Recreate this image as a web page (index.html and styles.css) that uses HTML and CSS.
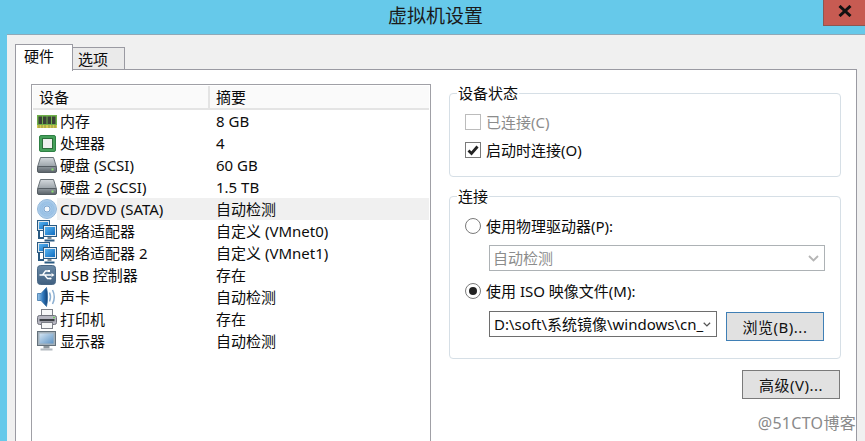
FILE: index.html
```html
<!DOCTYPE html>
<html lang="zh-CN">
<head>
<meta charset="utf-8">
<title>虚拟机设置</title>
<link rel="stylesheet" href="styles.css">
</head>
<body>
<svg class="defs" width="0" height="0" aria-hidden="true">
  <defs>
    <linearGradient id="disk" x1="0" y1="0" x2="0" y2="1"><stop offset="0" stop-color="#d4d9dd"/><stop offset="1" stop-color="#98a0a6"/></linearGradient>
    <linearGradient id="slab" x1="0" y1="0" x2="0" y2="1"><stop offset="0" stop-color="#8f979d"/><stop offset="1" stop-color="#596168"/></linearGradient>
    <linearGradient id="scr" x1="0" y1="0" x2="1" y2="1"><stop offset="0" stop-color="#58b4f0"/><stop offset="1" stop-color="#0f6cc0"/></linearGradient>
    <linearGradient id="disp" x1="0" y1="0" x2="1" y2="1"><stop offset="0" stop-color="#d3e4f2"/><stop offset="1" stop-color="#5e93c4"/></linearGradient>
    <linearGradient id="spk" x1="0" y1="0" x2="1" y2="0"><stop offset="0" stop-color="#9cc7ea"/><stop offset=".55" stop-color="#2f78bd"/><stop offset="1" stop-color="#123f73"/></linearGradient>
    <linearGradient id="usb" x1="0" y1="0" x2="0" y2="1"><stop offset="0" stop-color="#6c8aa6"/><stop offset="1" stop-color="#3f5f80"/></linearGradient>
    <radialGradient id="cd" cx=".5" cy=".5" r=".55"><stop offset="0" stop-color="#dbe9f6"/><stop offset=".55" stop-color="#8db9e2"/><stop offset="1" stop-color="#c3dbf1"/></radialGradient>
    <symbol id="i-hdd" viewBox="0 0 20 16"><path d="M3.500.5h13l3 9.500H.5z" fill="url(#disk)" stroke="#6a7278"/><rect x=".5" y="9.500" width="19" height="6" rx="1.500" fill="url(#slab)" stroke="#555d63"/><rect x="14.500" y="11.500" width="2" height="2" fill="#8be070"/></symbol>
    <symbol id="i-net" viewBox="0 0 20 22"><rect x=".5" y=".5" width="12" height="10" fill="#dfe6ec" stroke="#2a5a82"/><rect x="2" y="2" width="9" height="7" fill="url(#scr)"/><path d="M2 11v7h5" stroke="#2a5a82" stroke-width="2" fill="none"/><rect x="6.500" y="5.500" width="13" height="11" fill="#e6ecf1" stroke="#2a5a82"/><rect x="8" y="7" width="10" height="8" fill="url(#scr)"/><path d="M10.500 17h4v2h-4z" fill="#7d8a95"/><path d="M7.500 20.500h10" stroke="#2a5a82" stroke-width="2"/></symbol>
  </defs>
</svg>
<div class="window">
  <header class="titlebar">
    <h1 class="title">虚拟机设置</h1>
    <button class="close" type="button" aria-label="关闭">
      <svg width="14" height="12" viewBox="0 0 14 12"><path d="M1.500 1 12.500 11M12.500 1 1.500 11" stroke="#111" stroke-width="3" fill="none"/></svg>
    </button>
  </header>
  <div class="client">
    <nav class="tabs">
      <div class="tab active">硬件</div>
      <div class="tab">选项</div>
    </nav>
    <main class="panel">
      <section class="list">
        <div class="list-head">
          <div class="head-cell first">设备</div>
          <div class="head-cell">摘要</div>
        </div>
        <div class="row">
          <span class="ico"><svg width="20" height="13" viewBox="0 0 20 13"><rect x="0" y="0" width="20" height="11" fill="#6fb04a"/><rect x="0" y="10" width="20" height="3" fill="#d3c850"/><path d="M2 13v-3M5 13v-3M8 13v-3M12 13v-3M15 13v-3M18 13v-3" stroke="#7a8a40" stroke-width=".8"/><rect x="1.500" y="1.500" width="3.500" height="7.500" fill="#3a4238"/><rect x="6" y="1.500" width="3.500" height="7.500" fill="#3a4238"/><rect x="10.500" y="1.500" width="3.500" height="7.500" fill="#3a4238"/><rect x="15" y="1.500" width="3.500" height="7.500" fill="#3a4238"/></svg></span>
          <div class="cells"><span class="name">内存</span><span class="val">8 GB</span></div>
        </div>
        <div class="row">
          <span class="ico"><svg class="ico-cpu" width="17" height="17" viewBox="0 0 17 17"><rect x=".5" y=".5" width="16" height="16" rx="1.500" fill="#45a05a" stroke="#2f8045"/><rect x="3.500" y="3.500" width="10" height="10" fill="#eef0ee" stroke="#2c6d3a"/></svg></span>
          <div class="cells"><span class="name">处理器</span><span class="val">4</span></div>
        </div>
        <div class="row">
          <span class="ico"><svg width="20" height="16"><use href="#i-hdd"/></svg></span>
          <div class="cells"><span class="name">硬盘 (SCSI)</span><span class="val">60 GB</span></div>
        </div>
        <div class="row">
          <span class="ico"><svg width="20" height="16"><use href="#i-hdd"/></svg></span>
          <div class="cells"><span class="name">硬盘 2 (SCSI)</span><span class="val">1.5 TB</span></div>
        </div>
        <div class="row">
          <span class="ico"><svg width="20" height="20" viewBox="0 0 20 20"><circle cx="10" cy="10" r="9.500" fill="url(#cd)" stroke="#93b7d9"/><circle cx="10" cy="10" r="6" fill="none" stroke="#a9cbe9" stroke-width=".8"/><circle cx="10" cy="10" r="3" fill="#f4f8fc" stroke="#7ea6cf"/></svg></span>
          <div class="cells selected"><span class="name">CD/DVD (SATA)</span><span class="val">自动检测</span></div>
        </div>
        <div class="row">
          <span class="ico"><svg width="20" height="22"><use href="#i-net"/></svg></span>
          <div class="cells"><span class="name">网络适配器</span><span class="val">自定义 (VMnet0)</span></div>
        </div>
        <div class="row">
          <span class="ico"><svg width="20" height="22"><use href="#i-net"/></svg></span>
          <div class="cells"><span class="name">网络适配器 2</span><span class="val">自定义 (VMnet1)</span></div>
        </div>
        <div class="row">
          <span class="ico"><svg width="19" height="20" viewBox="0 0 19 20"><rect x=".5" y=".5" width="18" height="19" rx="3" fill="url(#usb)" stroke="#4a6886"/><path d="M2.500 10h12M5.500 10l3-4h3M7.500 10l3 3.500h2.500" stroke="#fff" stroke-width="1.300" fill="none"/><path d="M14.500 8l3 2-3 2z" fill="#fff"/><rect x="11" y="5" width="2" height="2" fill="#fff"/><circle cx="13.500" cy="13.500" r="1.100" fill="#fff"/></svg></span>
          <div class="cells"><span class="name">USB 控制器</span><span class="val">存在</span></div>
        </div>
        <div class="row">
          <span class="ico"><svg width="20" height="20" viewBox="0 0 20 20"><path d="M.5 6.500h3.500l5.500-6c1.500 6 1.500 13 0 19l-5.500-6H.5z" fill="url(#spk)" stroke="#2a659e" stroke-width=".7"/><path d="M12.500 5.500c1.300 3 1.300 6 0 9M15.500 3c2.300 4.500 2.300 9.500 0 14" stroke="#8db0d2" stroke-width="1.500" fill="none"/></svg></span>
          <div class="cells"><span class="name">声卡</span><span class="val">自动检测</span></div>
        </div>
        <div class="row">
          <span class="ico"><svg width="20" height="20" viewBox="0 0 20 20"><rect x="4.500" y=".5" width="11" height="7" fill="#f6f7f8" stroke="#7d8088"/><rect x=".5" y="6.500" width="19" height="9" rx="2" fill="#b5b5c0" stroke="#70727c"/><rect x="2.500" y="10" width="15" height="2.200" fill="#3a3e44"/><rect x="16" y="7.800" width="2" height="1.400" fill="#6fd060"/><rect x="4.500" y="13.500" width="11" height="6" fill="#f6f7f8" stroke="#7d8088"/></svg></span>
          <div class="cells"><span class="name">打印机</span><span class="val">存在</span></div>
        </div>
        <div class="row">
          <span class="ico"><svg width="19" height="20" viewBox="0 0 19 20"><rect x=".5" y=".5" width="18" height="14" fill="#a3b0ba" stroke="#64717b"/><rect x="2.500" y="2.500" width="14" height="10" fill="url(#disp)"/><path d="M6.500 15h6v2.500h-6z" fill="#8d969c"/><rect x="3.500" y="17.500" width="12" height="2" fill="#b3bac0"/></svg></span>
          <div class="cells"><span class="name">显示器</span><span class="val">自动检测</span></div>
        </div>
      </section>
      <aside class="side">
        <fieldset class="group status">
          <legend class="legend">设备状态</legend>
          <div class="opt disabled"><span class="check"></span>已连接(C)</div>
          <div class="opt"><span class="check on"><svg width="12" height="11" viewBox="0 0 12 11"><path d="M1.500 5.500 4.500 8.500 10.500 1.500" stroke="#222" stroke-width="2.800" fill="none"/></svg></span>启动时连接(O)</div>
        </fieldset>
        <fieldset class="group conn">
          <legend class="legend">连接</legend>
          <div class="opt"><span class="radio"></span>使用物理驱动器(P):</div>
          <div class="combo combo-off"><span class="combo-text">自动检测</span><svg width="11" height="7" viewBox="0 0 11 7"><path d="M1 1l4.500 4.500L10 1" stroke="#b5b5b5" stroke-width="1.800" fill="none"/></svg></div>
          <div class="opt"><span class="radio on"></span>使用 ISO 映像文件(M):</div>
          <div class="file-row">
            <div class="combo combo-file"><span class="combo-text">D:\soft\系统镜像\windows\cn_</span><svg width="11" height="7" viewBox="0 0 11 7"><path d="M1 1l4.500 4.500L10 1" stroke="#555" stroke-width="1.800" fill="none"/></svg></div>
            <button class="btn btn-focus" type="button">浏览(B)...</button>
          </div>
        </fieldset>
        <div class="actions"><button class="btn" type="button">高级(V)...</button></div>
      </aside>
      <div class="watermark">@51CTO博客</div>
    </main>
  </div>
</div>
</body>
</html>
```

FILE: styles.css
```css
* { box-sizing: border-box; }
html, body { margin: 0; height: 441px; overflow: hidden; }
body { font: 15px/22px "Noto Sans", "Noto Sans CJK SC", sans-serif; color: #0c0c0c; background: #66c9ea; }
.defs { position: absolute; }
.window { display: flex; flex-direction: column; height: 441px; }
.titlebar { flex: 0 0 34px; position: relative; display: flex; justify-content: center; align-items: center; padding-left: 6px; }
.title { margin: 0 0 3px; font-size: 19px; font-weight: 400; line-height: 26px; color: #1a1a1a; }
.close { position: absolute; top: 0; right: 0; width: 42px; height: 26px; padding: 0 0 3px; border: 1px solid #8d5650; border-width: 0 0 1px 1px; background: #c75b52; display: flex; align-items: center; justify-content: center; }
.client { flex: 1; min-height: 0; margin-left: 7px; padding: 10px 8px 0; background: #f0f0f0; border-top: 1px solid #8fa9b8; display: flex; flex-direction: column; }
.tabs { display: flex; align-items: flex-end; height: 25px; position: relative; z-index: 1; margin-bottom: -1px; }
.tab { height: 23px; width: 52px; padding: 0 5px; border: 1px solid #9a9aa2; border-left-width: 0; background: #eaeaea; line-height: 22px; }
.tab.active { height: 27px; width: 58px; padding-left: 8px; border-left-width: 1px; background: #fff; border-bottom: 0; margin-bottom: -1px; line-height: 22px; padding-bottom: 4px; }
.panel { flex: 1; min-height: 0; position: relative; background: #fff; border: 1px solid #9a9aa2; border-bottom: 0; padding: 13px 15px 0; display: grid; grid-template-columns: 400px 392px; column-gap: 18px; }
.list { margin-top: 1px; border: 1px solid #a0a0a6; border-bottom: 0; padding: 1px 1px 0; }
.list-head { display: flex; height: 24px; background: #fafafa; border-bottom: 2px solid #e4e4e4; }
.head-cell { padding-left: 6px; line-height: 23px; }
.head-cell.first { width: 177px; border-right: 2px solid #e4e4e4; }
.row { display: flex; height: 22px; }
.ico { flex: 0 0 24px; padding-left: 4px; display: flex; align-items: center; }
.ico-cpu { margin-left: 2px; }
.cells { flex: 1; display: flex; align-items: center; }
.cells.selected { background: #f0f0f0; }
.name { flex: 0 0 159px; padding-left: 3px; white-space: nowrap; }
.val { white-space: nowrap; }
.side { display: flex; flex-direction: column; }
.group { margin: 0; min-width: 0; border: 1px solid #d6dfe6; border-radius: 4px; padding: 0 15px; display: flex; flex-direction: column; }
.legend { margin-left: -8px; padding: 0 1px; line-height: 20px; }
.status { padding-top: 8px; padding-bottom: 15px; row-gap: 6px; height: 94px; }
.conn { margin-top: 9px; padding-top: 9px; padding-bottom: 17px; }
.opt { display: flex; align-items: center; height: 22px; column-gap: 5px; }
.opt.disabled { color: #8c8c8c; }
.check { width: 16px; height: 16px; border: 1px solid #7a7a7a; background: #fff; display: flex; align-items: center; justify-content: center; }
.disabled .check { border-color: #bcbcbc; }
.radio { width: 16px; height: 16px; border-radius: 50%; border: 1px solid #7a7a7a; background: #fff; display: flex; align-items: center; justify-content: center; }
.radio.on::after { content: ""; width: 8px; height: 8px; border-radius: 50%; background: #222; }
.combo { display: flex; align-items: center; justify-content: space-between; height: 26px; padding: 0 5px 0 4px; background: #fff; }
.combo-text { white-space: nowrap; }
.combo-off { margin: 8px 0 9px 24px; width: 336px; border: 1px solid #adb2b5; padding-left: 3px; color: #8c8c8c; }
.file-row { display: flex; align-items: flex-start; column-gap: 9px; margin: 9px 0 0 24px; }
.combo-file { width: 228px; border: 1px solid #6e6e6e; }
.btn { width: 98px; height: 29px; padding: 0; font: inherit; letter-spacing: .5px; color: #111; background: #e1e1e1; border: 1px solid #7a7a7a; }
.btn-focus { margin-top: 1px; border-color: #3f7fb5; box-shadow: inset 0 0 0 1px #e1e1e1; }
.actions { display: flex; justify-content: flex-end; margin: 11px 1px 0 0; }
.watermark { position: absolute; right: 0; bottom: 9px; font-size: 16px; letter-spacing: .3px; line-height: 18px; color: #8a8a8a; background: #fff; }
```
